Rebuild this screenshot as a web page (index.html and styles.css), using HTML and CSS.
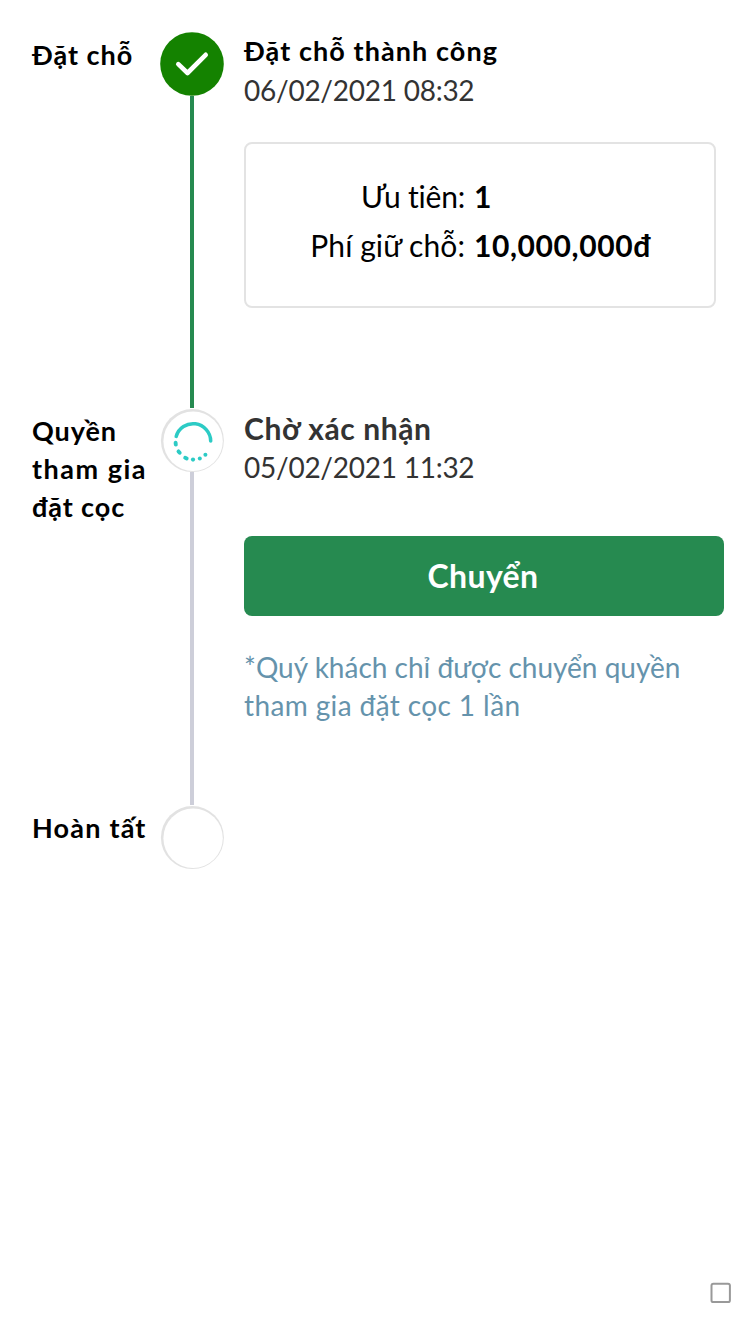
FILE: index.html
```html
<!DOCTYPE html>
<html lang="vi">
<head>
<meta charset="utf-8">
<title>Đặt chỗ</title>
<link rel="stylesheet" href="styles.css">
</head>
<body>
<main class="timeline">
  <section class="step step-booking">
    <h2 class="label"><span class="label-booking">Đặt chỗ</span></h2>
    <div class="rail">
      <svg class="marker" viewBox="0 0 64 64"><circle cx="32" cy="32" r="31.8" fill="#148200"/><path d="M18.3 32.2 27.5 41 45.7 22.8" fill="none" stroke="#fff" stroke-width="4.6" stroke-linecap="round" stroke-linejoin="round"/></svg>
      <div class="line line-done"></div>
    </div>
    <div class="content">
      <h3 class="title"><span class="title-booking">Đặt chỗ thành công</span></h3>
      <p class="time"><span>06/02/2021 08:32</span></p>
      <dl class="card">
        <dt><span class="priority">Ưu tiên:</span></dt><dd><span>1</span></dd>
        <dt><span class="fee">Phí giữ chỗ:</span></dt><dd><span class="amount">10,000,000đ</span></dd>
      </dl>
    </div>
  </section>
  <section class="step step-deposit">
    <h2 class="label"><span class="label-right">Quyền</span><br><span class="label-join">tham gia</span><br><span class="label-right">đặt cọc</span></h2>
    <div class="rail">
      <svg class="marker" viewBox="0 0 64 64"><use href="#ring"/><g fill="none" stroke="#2ccbc5" stroke-width="3.5" stroke-linecap="round"><path d="M16.2 27.4A17.6 17.6 0 0 1 50.7 32"/><path d="M15.6 33.8l.2 1.8" stroke-width="3.9"/><path d="M18.5 42.4l1.2 1.4M25.2 48.8l1.5.7" stroke-width="3.9"/></g><g fill="#2ccbc5"><circle cx="33" cy="50.6" r="2.1"/><circle cx="39.8" cy="49.4" r="2"/><circle cx="45.4" cy="45.7" r="2"/></g></svg>
      <div class="line line-pending"></div>
    </div>
    <div class="content">
      <h3 class="title title-dark"><span class="title-wait">Chờ xác nhận</span></h3>
      <p class="time"><span>05/02/2021 11:32</span></p>
      <button class="transfer"><span>Chuyển</span></button>
      <p class="note"><span>*Quý khách chỉ được chuyển quyền</span><br><span class="note-end">tham gia đặt cọc 1 lần</span></p>
    </div>
  </section>
  <section class="step">
    <h2 class="label"><span class="label-finish">Hoàn tất</span></h2>
    <div class="rail">
      <svg class="marker" viewBox="0 0 64 64"><defs><g id="ring"><circle cx="32.4" cy="31.6" r="31.5" fill="#e2e2e2"/><circle cx="33.1" cy="32.2" r="29.7" fill="#fff"/></g></defs><use href="#ring"/></svg>
    </div>
  </section>
</main>
<footer class="footer"><svg class="square" viewBox="0 0 22 22"><rect x="1.5" y="1.7" width="18.4" height="18.4" rx="1.9" fill="#fff" stroke="#999" stroke-width="2"/></svg></footer>
</body>
</html>
```
FILE: styles.css
```css
* { box-sizing: border-box; margin: 0; padding: 0; }
body {
  display: flex;
  flex-direction: column;
  justify-content: space-between;
  width: 750px;
  height: 1334px;
  background: #fff;
  color: #000;
  font: 28px/38px Lato, "Open Sans", "Noto Sans", sans-serif;
  font-variant-ligatures: none;
}
.timeline { padding: 32px 26px 0 32px; }
.step { display: grid; grid-template-columns: 128px 64px 480px; }
.step-booking { height: 377px; }
.step-deposit { height: 397px; }
.label { padding-top: 4px; font-size: 27px; font-weight: 700; line-height: 38px; white-space: nowrap; }
.step-deposit .label, .step:last-child .label { padding-top: 3px; }
.label-booking { letter-spacing: 1px; }
.label-right { letter-spacing: 0.9px; }
.label-join { letter-spacing: 1.5px; }
.label-finish { letter-spacing: 1.2px; }
.rail { display: flex; flex-direction: column; align-items: center; }
.marker { display: block; flex: none; width: 64px; height: 64px; }
.line { flex: 1; width: 4px; margin-bottom: 1px; }
.line-done { background: #268a50; }
.line-pending { margin-top: -1px; background: #cdced9; }
.content { padding-left: 20px; width: 500px; white-space: nowrap; }
.title { font-size: 27px; font-weight: 700; line-height: 38px; }
.title-booking { letter-spacing: 1.08px; }
.title-dark { color: #333; font-size: 30px; }
.title-wait { letter-spacing: 0.58px; }
.time { padding-top: 1px; height: 38px; color: #333; letter-spacing: -0.25px; }
.card {
  display: grid;
  grid-template-columns: 219px 1fr;
  column-gap: 9px;
  width: 472px;
  height: 166px;
  margin-top: 34px;
  padding-top: 28px;
  align-content: start;
  border: 2px solid #e3e3e3;
  border-radius: 8px;
  font-size: 30px;
  line-height: 49px;
}
.card dt { text-align: right; }
.card dd { font-weight: 700; }
.priority { letter-spacing: -0.2px; }
.fee { letter-spacing: 0.08px; }
.amount { letter-spacing: 0.6px; }
.transfer {
  display: block;
  width: 480px;
  height: 80px;
  margin-top: 51px;
  padding-right: 2px;
  border: 0;
  border-radius: 8px;
  background: #268a50;
  color: #fff;
  font: 700 32px/40px Lato, "Open Sans", "Noto Sans", sans-serif;
  letter-spacing: 0.35px;
}
.note { margin-top: 32px; color: #6593ac; }
.note-end { letter-spacing: 0.38px; }
.footer { display: flex; justify-content: flex-end; padding: 0 18px 30px 0; }
.square { display: block; width: 22px; height: 22px; }
```
